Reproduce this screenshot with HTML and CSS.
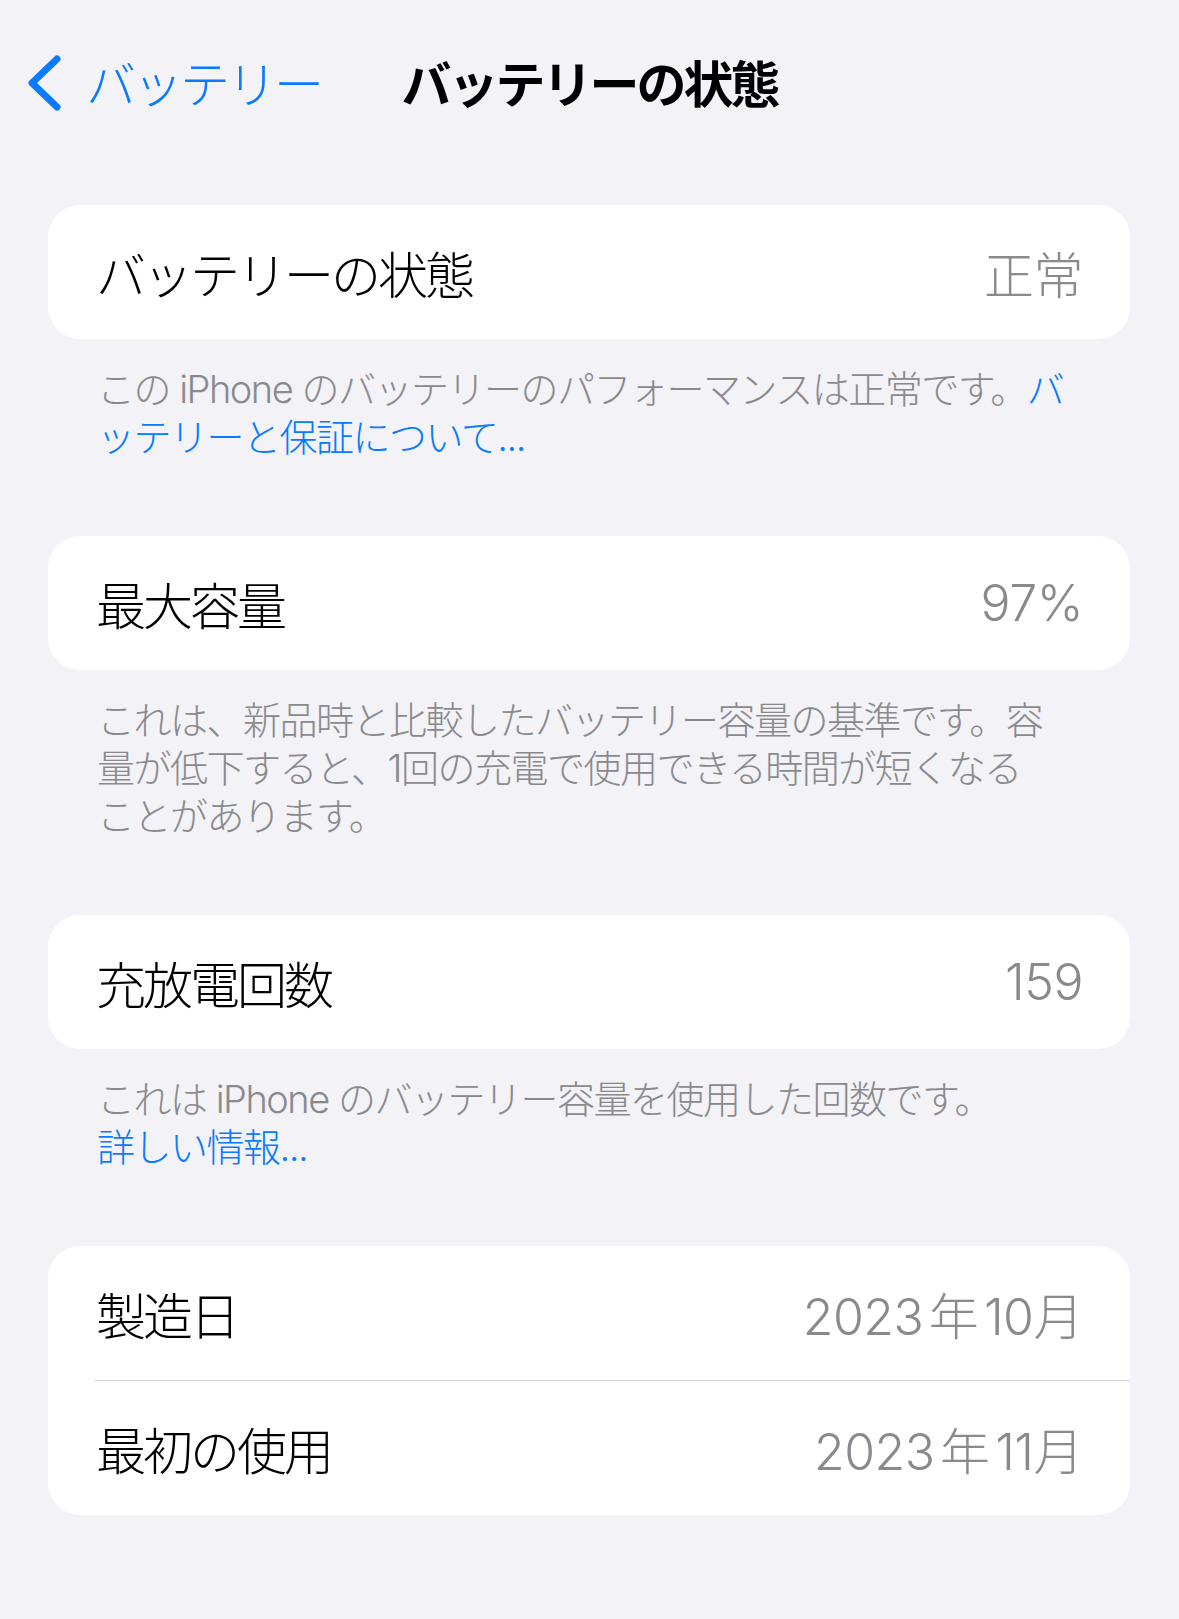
FILE: index.html
```html
<!DOCTYPE html>
<html lang="ja">
<head>
  <meta charset="UTF-8">
  <meta name="viewport" content="width=device-width, initial-scale=1.0">
  <title>バッテリーの状態</title>
  <link rel="stylesheet" href="styles.css">
</head>
<body>
  <header class="nav">
    <a class="back" href="#">
      <svg class="chevron" width="40" height="60" viewBox="0 0 40 60">
        <polyline points="32,4 7,28 32,52" fill="none" stroke="currentColor" stroke-width="7" stroke-linecap="round" stroke-linejoin="round"/>
      </svg>
      <span>バッテリー</span>
    </a>
    <h1 class="title">バッテリーの状態</h1>
    <div></div>
  </header>

  <main class="content">
    <section class="group">
      <div class="card">
        <div class="row">
          <span class="label">バッテリーの状態</span>
          <span class="value">正常</span>
        </div>
      </div>
      <p class="note">この iPhone のバッテリーのパフォーマンスは正常です。<a href="#">バ<br>ッテリーと保証について...</a></p>
    </section>

    <section class="group">
      <div class="card">
        <div class="row">
          <span class="label">最大容量</span>
          <span class="value">97%</span>
        </div>
      </div>
      <p class="note">これは、新品時と比較したバッテリー容量の基準です。容<br>量が低下すると、1回の充電で使用できる時間が短くなる<br>ことがあります。</p>
    </section>

    <section class="group">
      <div class="card">
        <div class="row">
          <span class="label">充放電回数</span>
          <span class="value">159</span>
        </div>
      </div>
      <p class="note">これは iPhone のバッテリー容量を使用した回数です。<br><a href="#">詳しい情報...</a></p>
    </section>

    <section class="group">
      <div class="card">
        <div class="row">
          <span class="label">製造日</span>
          <span class="value">2023 年 10月</span>
        </div>
        <div class="row">
          <span class="label">最初の使用</span>
          <span class="value">2023 年 11月</span>
        </div>
      </div>
    </section>
  </main>
</body>
</html>
```

FILE: styles.css
```css
body {
  margin: 0;
  min-height: 100vh;
  background: #f2f2f7;
  font-family: 'Inter', 'Noto Sans CJK JP', sans-serif;
  font-weight: 300;
  color: #000;
}
a {
  color: #0a7aff;
  text-decoration: none;
}
.nav {
  display: grid;
  grid-template-columns: 1fr auto 1fr;
  align-items: center;
  height: 70px;
  padding-top: 50px;
}
.back {
  display: flex;
  align-items: center;
  padding-left: 25px;
  font-size: 50px;
  letter-spacing: -3px;
  line-height: 1;
}
.chevron {
  margin-right: 21px;
}
.title {
  margin: 0;
  font-size: 50px;
  font-weight: 700;
  letter-spacing: -3px;
  line-height: 1;
}
.content {
  padding: 85px 49px 40px 48px;
}
.group {
  margin-bottom: 75px;
}
.card {
  background: #fff;
  border-radius: 32px;
  overflow: hidden;
}
.row {
  display: flex;
  justify-content: space-between;
  align-items: center;
  height: 134px;
  padding: 0 47px 0 48px;
  font-size: 50px;
  letter-spacing: -3px;
}
.row + .row {
  border-top: 1.5px solid #d1d1d6;
  margin-left: 47px;
  padding-left: 1px;
}
.value {
  color: #8a8a8e;
  letter-spacing: -0.5px;
  word-spacing: -8px;
}
.note {
  margin: 0;
  padding: 26px 50px 0 49px;
  font-size: 38px;
  line-height: 48px;
  letter-spacing: -1.5px;
  color: #8a8a8e;
}
```
